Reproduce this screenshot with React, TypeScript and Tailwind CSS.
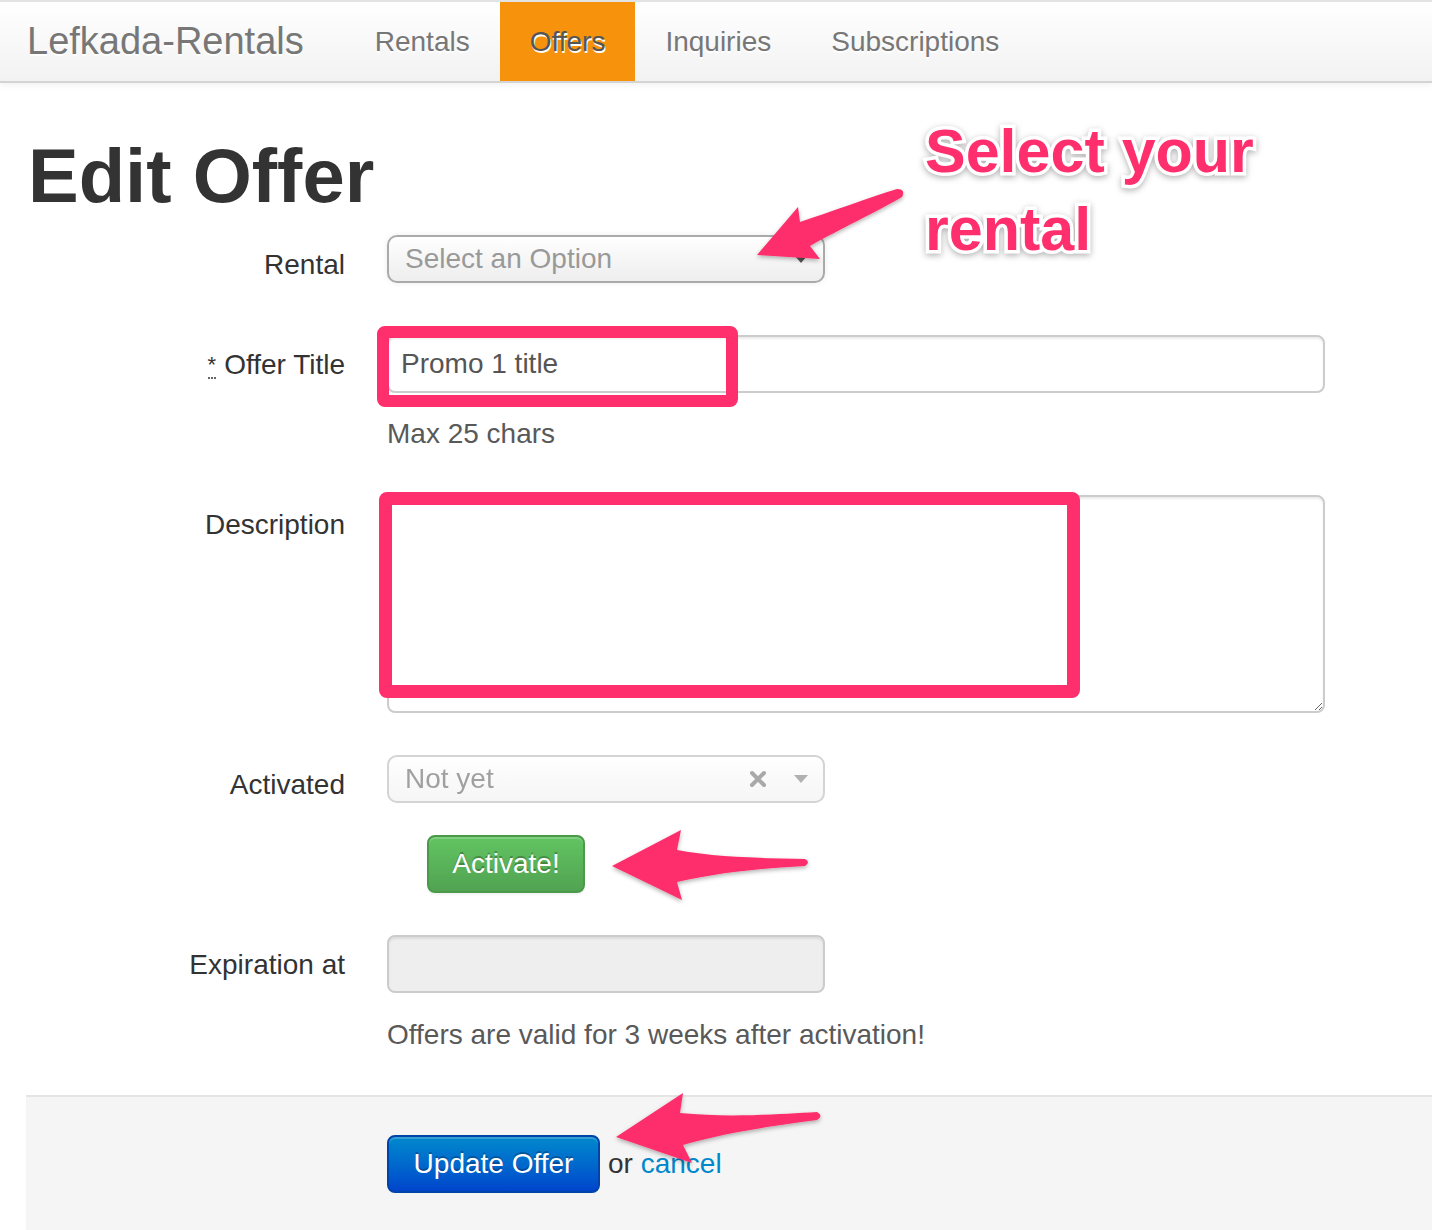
import React from 'react';

const PINK = '#fe2f6c';

const navItems = ['Rentals', 'Offers', 'Inquiries', 'Subscriptions'];

const Label = ({ children }: { children: React.ReactNode }) => (
  <label className="w-[319px] shrink-0 text-right pt-[10px] leading-[40px] text-[28px] text-[#333]">
    {children}
  </label>
);

const Caret = ({ color }: { color: string }) => (
  <svg width="16" height="10" viewBox="0 0 16 10" className="shrink-0">
    <path d="M1 1 L15 1 L8 9 Z" fill={color} />
  </svg>
);

export default function App() {
  return (
    <div className="relative w-[1432px] h-[1230px] overflow-hidden bg-white font-['Liberation_Sans',Arial,sans-serif]">
      {/* navbar */}
      <div className="h-[83px] border-t-2 border-b-2 border-t-[#e3e3e3] border-b-[#d4d4d4] bg-gradient-to-b from-white to-[#f2f2f2] shadow-[0_2px_6px_rgba(0,0,0,0.06)] flex items-stretch">
        <div className="pl-[27px] pr-[41px] leading-[79px] text-[38px] text-[#777] [text-shadow:0_2px_0_#fff]">
          Lefkada-Rentals
        </div>
        <ul className="flex">
          {navItems.map((item) => (
            <li
              key={item}
              className={
                item === 'Offers'
                  ? 'px-[30px] leading-[79px] text-[28px] text-[#555] bg-[#f7920c] [text-shadow:1px_2px_0_#fff]'
                  : 'px-[30px] leading-[79px] text-[28px] text-[#777] [text-shadow:0_2px_0_#fff]'
              }
            >
              {item}
            </li>
          ))}
        </ul>
      </div>

      <div className="pl-[26px]">
        <h1 className="mt-[55px] pl-[2px] text-[76px] leading-[76px] font-bold text-[#333]">Edit Offer</h1>

        {/* Rental */}
        <div className="mt-[21px] flex">
          <Label>Rental</Label>
          <div className="ml-[42px] w-[438px] h-[48px] rounded-[10px] border-2 border-[#aaa] bg-gradient-to-b from-white via-[#f6f6f6] to-[#eee] shadow-[0_0_6px_rgba(0,0,0,0.08)] flex items-center pl-[16px] pr-[14px]">
            <span className="flex-1 text-[28px] text-[#999]">Select an Option</span>
            <Caret color="#555" />
          </div>
        </div>

        {/* Offer Title */}
        <div className="mt-[50px] flex">
          <Label>
            <abbr className="no-underline border-b-2 border-dotted border-[#666] text-[22px] align-top mr-[8px]" title="required">*</abbr>
            Offer Title
          </Label>
          <div className="ml-[42px]">
            <input
              readOnly
              value="Promo 1 title"
              className="w-[938px] h-[58px] rounded-[8px] border-2 border-[#ccc] pl-[12px] text-[28px] text-[#555] shadow-[inset_0_2px_2px_rgba(0,0,0,0.075)] outline-none"
            />
            <p className="mt-[26px] leading-[30px] text-[28px] text-[#595959]">Max 25 chars</p>
          </div>
        </div>

        {/* Description */}
        <div className="mt-[46px] flex">
          <Label>Description</Label>
          <textarea
            readOnly
            className="ml-[42px] w-[938px] h-[218px] rounded-[8px] border-2 border-[#ccc] shadow-[inset_0_2px_2px_rgba(0,0,0,0.075)] outline-none"
          />
        </div>

        {/* Activated */}
        <div className="mt-[42px] flex">
          <Label>Activated</Label>
          <div className="ml-[42px]">
            <div className="w-[438px] h-[48px] rounded-[10px] border-2 border-[#aaa] bg-gradient-to-b from-white via-[#f6f6f6] to-[#eee] opacity-50 flex items-center pl-[16px] pr-[14px]">
              <span className="flex-1 text-[28px] text-[#444]">Not yet</span>
              <svg width="18" height="18" viewBox="0 0 18 18" className="mr-[26px]">
                <path d="M3 3 L15 15 M15 3 L3 15" stroke="#555" strokeWidth="4" strokeLinecap="round" />
              </svg>
              <Caret color="#666" />
            </div>
            <button className="mt-[32px] ml-[40px] w-[158px] h-[58px] rounded-[8px] border-2 border-[#4a9a4a] bg-gradient-to-b from-[#62c462] to-[#51a351] text-white text-[28px] [text-shadow:0_-2px_0_rgba(0,0,0,0.25)] shadow-[inset_0_2px_0_rgba(255,255,255,0.2),0_2px_2px_rgba(0,0,0,0.05)]">
              Activate!
            </button>
          </div>
        </div>

        {/* Expiration */}
        <div className="mt-[42px] flex">
          <Label>Expiration at</Label>
          <div className="ml-[42px]">
            <div className="w-[438px] h-[58px] rounded-[8px] border-2 border-[#ccc] bg-[#eee] shadow-[inset_0_2px_2px_rgba(0,0,0,0.075)]" />
            <p className="mt-[27px] leading-[30px] text-[28px] text-[#595959]">Offers are valid for 3 weeks after activation!</p>
          </div>
        </div>

        {/* Form actions */}
        <div className="mt-[45px] h-[200px] border-t-2 border-[#e5e5e5] bg-[#f5f5f5] pt-[38px] pl-[361px] flex items-start">
          <button className="w-[213px] h-[58px] rounded-[8px] border-2 border-[#0044aa] bg-gradient-to-b from-[#0088cc] to-[#0044cc] text-white text-[28px] [text-shadow:0_-2px_0_rgba(0,0,0,0.25)] shadow-[inset_0_2px_0_rgba(255,255,255,0.2)]">
            Update Offer
          </button>
          <span className="ml-[8px] leading-[58px] text-[28px] text-[#333]">
            or <a className="text-[#0088cc]">cancel</a>
          </span>
        </div>
      </div>

      {/* annotations */}
      <div className="absolute left-[377px] top-[326px] w-[361px] h-[81px] border-[12px] border-[#fe2f6c] rounded-[8px] pointer-events-none" />
      <div className="absolute left-[379px] top-[492px] w-[701px] h-[206px] border-[13px] border-[#fe2f6c] rounded-[8px] pointer-events-none" />

      <div className="absolute left-[925px] top-[112px] text-[61px] leading-[78px] font-bold text-[#fe2f6c] [-webkit-text-stroke:7px_#fff] [paint-order:stroke_fill] [filter:drop-shadow(0_2px_3px_rgba(0,0,0,0.3))]">
        Select your
        <br />
        rental
      </div>

      <svg className="absolute inset-0 pointer-events-none" width="1432" height="1230" viewBox="0 0 1432 1230">
        <defs>
          <filter id="sh" x="-20%" y="-20%" width="140%" height="140%">
            <feDropShadow dx="0" dy="2" stdDeviation="2" floodColor="#000" floodOpacity="0.3" />
          </filter>
        </defs>
        <g fill={PINK} filter="url(#sh)">
          <path d="M757,255 L798,207 L800,222 C830,212 868,198 897,189 Q906,189 902,197 C878,211 840,229 810,246 L820,259 Z" />
          <path d="M612,866 L681,830 L677,850 C720,858 768,858 805,859 Q811,862 805,866 C768,868 720,872 677,882 L682,900 Z" />
          <path d="M616,1137 L683,1093 L680,1113 C730,1118 780,1114 817,1112 Q824,1116 817,1120 C770,1126 720,1134 683,1145 L692,1163 Z" />
        </g>
      </svg>
    </div>
  );
}
